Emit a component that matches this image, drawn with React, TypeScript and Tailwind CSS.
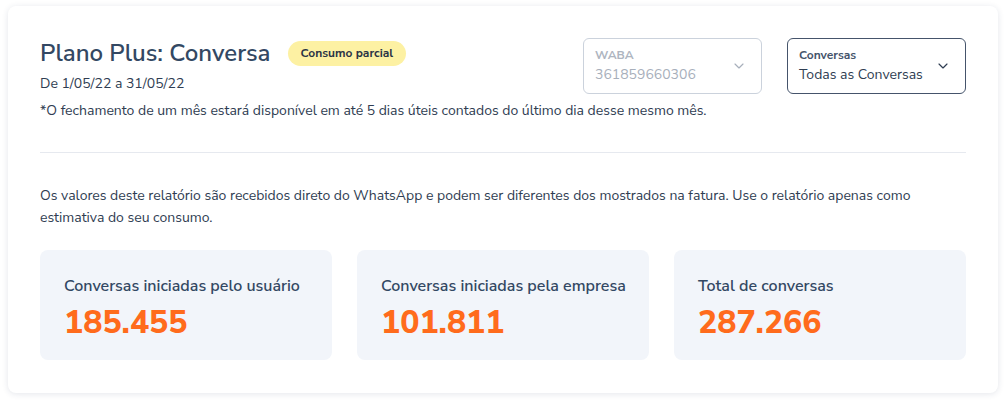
import { ChevronDown } from "lucide-react";

const stats = [
  { label: "Conversas iniciadas pelo usuário", value: "185.455" },
  { label: "Conversas iniciadas pela empresa", value: "101.811" },
  { label: "Total de conversas", value: "287.266" },
];

function SelectBox({
  label,
  value,
  disabled,
}: {
  label: string;
  value: string;
  disabled?: boolean;
}) {
  return (
    <div
      className={`flex items-center justify-between w-[179px] h-[56px] pl-[11px] pr-[14px] rounded-md border ${
        disabled ? "border-[#cbd2dc] text-[#a7afbb]" : "border-[#45546b] text-[#2f3d52]"
      }`}
    >
      <div className="flex flex-col">
        <span className={`text-[12px] font-bold leading-[16px] ${disabled ? "text-[#aeb5c0]" : "text-[#45546b]"}`}>
          {label}
        </span>
        <span className="text-[14px] leading-[20px] mt-[2px]">{value}</span>
      </div>
      <ChevronDown
        size={16}
        strokeWidth={1.75}
        className={disabled ? "text-[#a7afbb]" : "text-[#2f3d52]"}
      />
    </div>
  );
}

export default function App() {
  return (
    <div
      className="bg-white w-[1006px] h-[403px] pt-[6px] pl-[8px]"
      style={{ fontFamily: '"Nunito Sans", Lato, "Noto Sans", sans-serif' }}
    >
      <div className="w-[990px] h-[387px] bg-white rounded-lg shadow-[0_1px_6px_rgba(30,50,90,0.12)] px-[32px] pt-[32px] text-[#2f3d52]">
        <div className="flex justify-between items-start">
          <div>
            <div className="flex items-center gap-[17px]">
              <h1 className="text-[24px] font-semibold leading-[30px] text-[#334863]">
                Plano Plus: Conversa
              </h1>
              <span className="bg-[#fdf1a3] rounded-full px-[13px] h-[25px] flex items-center text-[12px] font-bold text-[#2b3445]">
                Consumo parcial
              </span>
            </div>
            <p className="text-[14px] leading-[20px] mt-[6px]">De 1/05/22 a 31/05/22</p>
          </div>
          <div className="flex gap-[25px]">
            <SelectBox label="WABA" value="361859660306" disabled />
            <SelectBox label="Conversas" value="Todas as Conversas" />
          </div>
        </div>
        <p className="text-[14px] leading-[20px] mt-[7px] whitespace-nowrap">
          *O fechamento de um mês estará disponível em até 5 dias úteis contados do último dia desse mesmo mês.
        </p>

        <div className="h-px bg-[#e6e9ef] mt-[31px]" />

        <p className="text-[14px] leading-[22px] mt-[32px] pr-[10px]">
          Os valores deste relatório são recebidos direto do WhatsApp e podem ser diferentes dos mostrados na fatura. Use o relatório apenas como estimativa do seu consumo.
        </p>

        <div className="grid grid-cols-3 gap-[25px] mt-[21px]">
          {stats.map((s) => (
            <div key={s.label} className="bg-[#f2f5fa] rounded-lg h-[110px] px-[24px] pt-[25px]">
              <p className="text-[16px] font-semibold leading-[22px] text-[#334863] whitespace-nowrap">
                {s.label}
              </p>
              <p className="text-[32px] font-extrabold leading-[40px] text-[#ff6b1c] mt-[6px]">
                {s.value}
              </p>
            </div>
          ))}
        </div>
      </div>
    </div>
  );
}
